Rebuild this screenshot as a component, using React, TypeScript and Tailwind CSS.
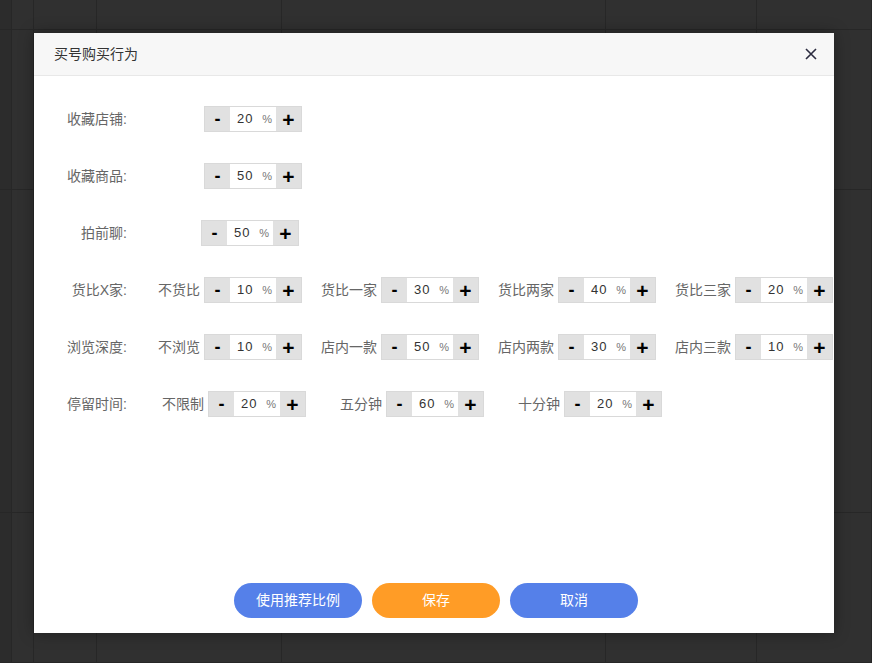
import React from "react";

const font = { fontFamily: '"Liberation Sans", "Noto Sans CJK SC", sans-serif' };

const Stepper = ({ value }: { value: number }) => {
  return (
    <div className="flex h-[26px] w-[98px] shrink-0 border border-[#d9d9d9]">
      <div className="flex w-[25px] items-center justify-center bg-[#e1e1e1] text-[18px] font-bold leading-none text-black">
        -
      </div>
      <div className="flex w-[46px] items-center bg-white pl-[7px] pr-[4px] text-[13px] text-[#333]">
        <span className="tracking-[1px]">{value}</span>
        <span className="ml-auto text-[11px] text-[#777]">%</span>
      </div>
      <div className="flex w-[25px] items-center justify-center bg-[#e1e1e1] text-[21px] font-bold leading-none text-black">
        +
      </div>
    </div>
  );
};

const Label = ({ text }: { text: string }) => (
  <div className="w-[93px] shrink-0 text-right text-[14px] text-[#666]">{text}</div>
);

type Opt = { name: string; value: number };

const MultiRow = ({
  label,
  opts,
  first,
  gap,
}: {
  label: string;
  opts: Opt[];
  first: string;
  gap: string;
}) => (
  <div className="flex h-[26px] items-center">
    <Label text={label} />
    {opts.map((o, i) => (
      <div key={o.name} className={`flex items-center ${i === 0 ? first : gap}`}>
        <span className="mr-1 whitespace-nowrap text-[14px] text-[#666]">{o.name}</span>
        <Stepper value={o.value} />
      </div>
    ))}
  </div>
);

export default function App() {
  return (
    <div className="relative h-[663px] w-[872px] overflow-hidden bg-[#303030]" style={font}>
      {/* page behind the overlay */}
      <div className="grid h-full w-full grid-cols-[12px_22px_63px_185px_324px_151px_115px] grid-rows-[30px_160px_323px_150px]">
        {Array.from({ length: 28 }).map((_, i) => (
          <div
            key={i}
            className={`border-b border-r border-[#272727] ${i % 7 === 0 ? "bg-[#2c2c2c]" : ""}`}
          />
        ))}
      </div>

      {/* dialog */}
      <div className="absolute left-[34px] top-[33px] flex h-[600px] w-[800px] flex-col overflow-hidden bg-white shadow-[0_0_14px_rgba(0,0,0,0.35)]">
        <div className="flex h-[43px] shrink-0 items-center justify-between border-b border-[#e8e8e8] bg-[#f7f7f7] pl-5 pr-[17px]">
          <span className="text-[14px] text-[#333]">买号购买行为</span>
          <svg width="12" height="12" viewBox="0 0 12 12">
            <path d="M1 1L11 11M11 1L1 11" stroke="#2b2b3f" strokeWidth="1.6" />
          </svg>
        </div>

        <div className="flex flex-1 flex-col pb-[15px] pt-[30px]">
          <div className="flex flex-col gap-[31px]">
            <div className="flex h-[26px] items-center">
              <Label text="收藏店铺:" />
              <div className="ml-[77px]">
                <Stepper value={20} />
              </div>
            </div>
            <div className="flex h-[26px] items-center">
              <Label text="收藏商品:" />
              <div className="ml-[77px]">
                <Stepper value={50} />
              </div>
            </div>
            <div className="flex h-[26px] items-center">
              <Label text="拍前聊:" />
              <div className="ml-[74px]">
                <Stepper value={50} />
              </div>
            </div>
            <MultiRow
              label="货比X家:"
              first="ml-[31px]"
              gap="ml-[19px]"
              opts={[
                { name: "不货比", value: 10 },
                { name: "货比一家", value: 30 },
                { name: "货比两家", value: 40 },
                { name: "货比三家", value: 20 },
              ]}
            />
            <MultiRow
              label="浏览深度:"
              first="ml-[31px]"
              gap="ml-[19px]"
              opts={[
                { name: "不浏览", value: 10 },
                { name: "店内一款", value: 50 },
                { name: "店内两款", value: 30 },
                { name: "店内三款", value: 10 },
              ]}
            />
            <MultiRow
              label="停留时间:"
              first="ml-[35px]"
              gap="ml-[34px]"
              opts={[
                { name: "不限制", value: 20 },
                { name: "五分钟", value: 60 },
                { name: "十分钟", value: 20 },
              ]}
            />
          </div>

          <div className="mt-auto flex justify-center gap-[10px] pl-[4px]">
            <button className="h-[35px] w-[128px] rounded-full bg-[#5580e9] text-[14px] text-white">
              使用推荐比例
            </button>
            <button className="h-[35px] w-[128px] rounded-full bg-[#ff9c26] text-[14px] text-white">
              保存
            </button>
            <button className="h-[35px] w-[128px] rounded-full bg-[#5580e9] text-[14px] text-white">
              取消
            </button>
          </div>
        </div>
      </div>
    </div>
  );
}
